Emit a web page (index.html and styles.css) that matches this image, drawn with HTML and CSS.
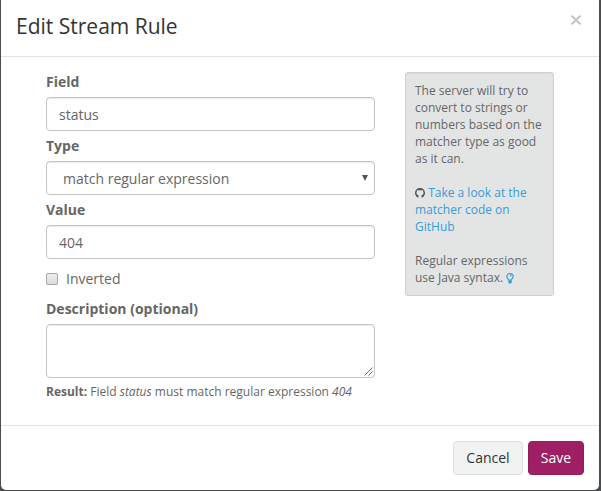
FILE: index.html
```
<!DOCTYPE html>
<html lang="en">
<head>
<meta charset="utf-8">
<title>Edit Stream Rule</title>
<link rel="stylesheet" href="styles.css">
</head>
<body>
<div class="modal">
  <header class="modal-header">
    <h2>Edit Stream Rule</h2>
    <button class="close" type="button" aria-label="Close"><svg width="10" height="10" viewBox="0 0 10 10"><path d="M.6.6l8.8 8.8M9.4.6L.6 9.4"/></svg></button>
  </header>
  <main class="modal-body">
    <form class="fields">
      <label for="field">Field</label>
      <input class="control" id="field" type="text" value="status">
      <label for="type">Type</label>
      <div class="control select" id="type"><span>match regular expression</span><svg width="6" height="6" viewBox="0 0 6 6"><path d="M0 0h6L3 6z"/></svg></div>
      <label for="value">Value</label>
      <input class="control" id="value" type="text" value="404">
      <div class="check"><span class="box"></span><span>Inverted</span></div>
      <label for="description">Description (optional)</label>
      <div class="control area" id="description"><svg width="9" height="9" viewBox="0 0 9 9"><path d="M.5 8.5l8-8M4.5 8.5l4-4"/></svg></div>
      <p class="result"><strong>Result:</strong> Field <em>status</em> must match regular expression <em>404</em></p>
    </form>
    <aside class="well">
      <p>The server will try to convert to strings or numbers based on the matcher type as good as it can.</p>
      <p><svg class="github" width="10" height="10" viewBox="0 0 10 10"><path d="M3.4 9.7A5 5 0 1 1 6.6 9.7V8.2C6.6 7.7 6.5 7.4 6.3 7.2 7.8 7 8.5 6.1 8.5 4.7c0-.6-.2-1-.5-1.4.1-.4.1-.8-.1-1.2-.5 0-.9.2-1.3.5a5 5 0 0 0-3.2 0C3 2.300 2.600 2.100 2.100 2.100c-.2.400-.2.800-.1 1.200-.3.400-.5.800-.5 1.400 0 1.400.7 2.300 2.200 2.500-.2.200-.3.500-.3.800z"/></svg> <a>Take a look at the matcher code on GitHub</a></p>
      <p>Regular expressions use Java syntax. <svg class="bulb" width="8" height="11" viewBox="0 0 8 11"><path d="M2.600 7C2.500 5.800.8 5.200.8 3.600a3.200 3 0 0 1 6.400 0C7.200 5.200 5.500 5.800 5.400 7zM4 2.300c.8 0 1.300.4 1.300 1"/><path class="base" d="M2.300 7.200h3.400v2.300L4.800 10.500H3.200L2.300 9.500z"/></svg></p>
    </aside>
  </main>
  <footer class="modal-footer">
    <button class="btn cancel" type="button">Cancel</button>
    <button class="btn save" type="button">Save</button>
  </footer>
</div>
</body>
</html>
```

FILE: styles.css
```
* { box-sizing: border-box; }
body {
  margin: 0;
  height: 491px;
  padding: 0 2px 1px 1px;
  overflow: hidden;
  background: #4b4c4e;
  color: #666;
  font: 14px/20px "Open Sans", sans-serif;
}
.modal {
  display: flex;
  flex-direction: column;
  height: 490px;
  background: #fff;
  border-radius: 0 0 5px 5px;
}
.modal-header {
  display: flex;
  justify-content: space-between;
  height: 57px;
  padding: 13px 18px 0 15px;
  border-bottom: 1px solid #e2e2e2;
}
h2 { margin: 0; color: #333; font-size: 21px; font-weight: 400; line-height: 26px; }
.close { display: block; height: 10px; margin-top: 2px; padding: 0; border: 0; background: none; }
.close svg { display: block; fill: none; stroke: #c4c4c4; stroke-width: 2; }
.modal-body {
  display: flex;
  align-items: flex-start;
  gap: 30px;
  height: 368px;
  padding: 15px 45px 0;
}
.fields { width: 329px; }
label { display: block; height: 25px; font-weight: 700; }
.control {
  display: block;
  width: 100%;
  height: 34px;
  margin: 0 0 5px;
  padding: 6px 12px;
  border: 1px solid #c4c4c4;
  border-radius: 4px;
  background: #fff;
  box-shadow: inset 0 1px 1px rgba(0, 0, 0, .075);
  color: #666;
  font: inherit;
}
.select { display: flex; align-items: center; justify-content: space-between; padding: 0 6px 0 16px; }
.select span { position: relative; top: 1px; }
.select svg { fill: #555; }
.check { display: flex; align-items: center; gap: 8px; height: 20px; margin: 10px 0; }
.box {
  width: 12px;
  height: 12px;
  border: 1px solid #a5a5a5;
  border-radius: 2px;
  background: linear-gradient(#eee, #dcdcdc);
}
.area { display: flex; align-items: flex-end; justify-content: flex-end; height: 54px; padding: 1px; }
.area svg { fill: none; stroke: #666; stroke-width: 1; }
.result { margin: 0; font-size: 12px; line-height: 17px; white-space: nowrap; }
.well {
  width: 149px;
  height: 224px;
  padding: 9px;
  border: 1px solid #cdd0d0;
  border-radius: 3px;
  background: #e3e5e5;
  box-shadow: inset 0 1px 1px rgba(0, 0, 0, .05);
  font-size: 12px;
  line-height: 17px;
}
.well p { margin: 0 0 17px; }
.well svg { vertical-align: -1px; }
.well .bulb { vertical-align: -2px; fill: none; stroke: #2e9fdb; stroke-width: 1.2; }
.bulb .base { fill: #2e9fdb; stroke: none; }
.github { fill: #555; }
a { color: #3a9bd6; }
.modal-footer {
  display: flex;
  justify-content: flex-end;
  gap: 5px;
  height: 65px;
  padding: 15px 15px 0;
  border-top: 1px solid #e2e2e2;
}
.btn { height: 34px; padding: 0; border: 1px solid; border-radius: 4px; font: inherit; }
.cancel { width: 70px; border-color: #dce1e0; background: #f0f3f2; color: #333; }
.save { width: 56px; border-color: #951b5b; background: #9e1f63; color: #fff; }
```
